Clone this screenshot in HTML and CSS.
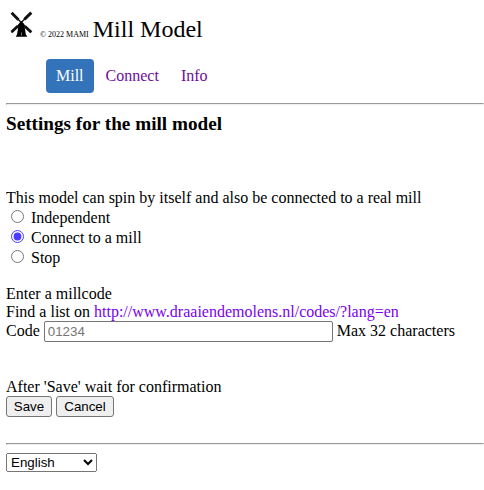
FILE: index.html
```html
<!DOCTYPE html>
<html lang="en">
<head>
<meta charset="utf-8">
<title>Mill Model</title>
<link rel="stylesheet" href="styles.css">
</head>
<body>
<header class="brand">
  <svg class="logo" viewBox="0 0 30 32" aria-hidden="true">
    <g stroke="#111" stroke-linecap="butt" fill="none">
      <path d="M15.3 14.5 6 5M15.3 14.5 24.5 5M15.3 14.5 5.5 24.5M15.3 14.5 25 24.5" stroke-width="1.4"/>
      <path d="M12.4 11.8 5.6 4.8M18.4 11.4 25.3 4.6M12 18 5.5 24M18.8 18.2 25.3 24.2" stroke-width="2.9"/>
    </g>
    <path d="M12.6 16 15.3 13l2.8 3 1.1 6.5.7 4.2 1.1 1.2v.9H10v-.9l1-1.2.7-4.2z" fill="#000"/>
    <path d="M15 24.5h1v3h-1z" fill="#777"/>
  </svg>
  <span class="copyright">© 2022 MAMI</span>
  <span class="title">Mill Model</span>
</header>
<nav class="tabs">
  <a class="tab active">Mill</a>
  <a class="tab">Connect</a>
  <a class="tab">Info</a>
</nav>
<hr>
<h3>Settings for the mill model</h3>
<form>
  <div class="line">This model can spin by itself and also be connected to a real mill</div>
  <label class="option"><input type="radio" name="mode"><span>Independent</span></label>
  <label class="option"><input type="radio" name="mode" checked><span>Connect to a mill</span></label>
  <label class="option"><input type="radio" name="mode"><span>Stop</span></label>
  <div class="code">
    <div class="line">Enter a millcode</div>
    <div class="line">Find a list on <a class="link">http://www.draaiendemolens.nl/codes/?lang=en</a></div>
    <div class="field"><span>Code</span><input class="text" type="text" placeholder="01234"><span>Max 32 characters</span></div>
  </div>
  <div class="line">After 'Save' wait for confirmation</div>
  <div class="actions"><button type="button" class="save">Save</button><button type="button" class="cancel">Cancel</button></div>
</form>
<hr>
<select class="language"><option>English</option></select>
</body>
</html>
```
FILE: styles.css
```css
* { box-sizing: border-box; }
body {
  margin: 8px 0 0 6px;
  width: 478px;
  font: 16px/18px "Liberation Serif", serif;
  color: #000;
  background: #fff;
}
.brand { display: flex; align-items: baseline; height: 51px; }
.logo { width: 30px; height: 32px; align-self: flex-start; }
.copyright { margin-left: 4px; font-size: 8px; }
.title { margin-left: 4px; font-size: 24px; line-height: 42px; }
.tabs { display: flex; gap: 2px; height: 34px; padding-left: 40px; }
.tab { padding: 8px 10px; border-radius: 4px; color: #6f0c98; }
.tab.active { background: #3273b9; color: #fff; }
hr { margin: 0; height: 2px; border: 1px solid; border-color: #9a9a9a #eee #eee #9a9a9a; }
.tabs + hr { margin-top: 10px; }
h3 { margin: 8px 0 54px; font-size: 19.2px; line-height: 22px; }
.line { height: 18px; }
.option { display: flex; align-items: flex-start; height: 20px; }
.option input { width: 13px; height: 13px; margin: 3px 7px 0 5px; accent-color: #4b3cff; }
.option span { padding-top: 2px; }
.code { margin: 18px 0 36px; }
.link { color: #7a00f0; }
.field { display: flex; align-items: flex-start; height: 21px; }
.field span { padding-top: 1px; }
.text { width: 289px; height: 21px; margin: 0 4px; padding: 1px 2px 1px 3px; border: 1px solid #767676; border-radius: 2px; font: 13.333px "Liberation Sans", sans-serif; }
.actions { display: flex; gap: 4px; height: 21px; }
button { height: 21px; padding: 0; border: 1px solid #767676; border-radius: 3px; background: #efefef; font: 13.333px "Liberation Sans", sans-serif; color: #000; }
.save { width: 46px; }
.cancel { width: 58px; }
form + hr { margin-top: 26px; }
.language { display: block; width: 91px; height: 19px; margin: 8px 0 0; font: 13.333px "Liberation Sans", sans-serif; }
```
